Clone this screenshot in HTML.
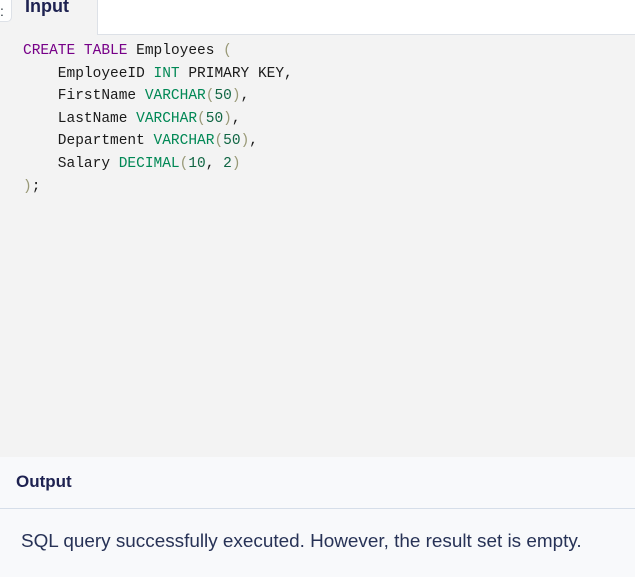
<!DOCTYPE html>
<html><head><meta charset="utf-8"><style>
html,body{margin:0;padding:0;width:635px;height:577px;overflow:hidden;background:#f3f3f3;font-family:"Liberation Sans",sans-serif}
.top{position:absolute;left:0;top:0;width:635px;height:34px;background:#f3f3f3}
.lt{position:absolute;left:-10px;top:-5px;width:20px;height:25px;background:#fff;border:1px solid #dde1e7;border-radius:0 0 5px 0}
.lt span{position:absolute;left:9px;top:7px;font-size:14px;color:#273239}
.rt{position:absolute;left:97px;top:-1px;width:540px;height:35px;background:#fff;border-left:1px solid #dde1e7;border-bottom:1px solid #dde1e7}
.tab{position:absolute;left:25px;top:-4px;font-size:18px;font-weight:bold;color:#1e2251}
pre{position:absolute;left:23px;top:40px;margin:0;font-family:"Liberation Mono",monospace;font-size:14.5px;line-height:22.6px;color:#1a1a1a}
.k{color:#770088}.t{color:#008855}.p{color:#999977}.n{color:#116644}
.out{position:absolute;left:0;top:457px;width:635px;height:120px;background:#f8f9fb}
.oh{position:absolute;left:0;top:0;width:635px;height:51px;border-bottom:1px solid #d6dee9}
.oh span{position:absolute;left:16px;top:15px;font-size:17px;font-weight:bold;color:#1e2251}
.msg{position:absolute;left:21px;top:74px;font-size:18.9px;color:#273256}
</style></head><body>
<div class="top"><div class="lt"><span>:</span></div><div class="rt"></div><div class="tab">Input</div></div>
<pre><span class="k">CREATE</span> <span class="k">TABLE</span> Employees <span class="p">(</span>
    EmployeeID <span class="t">INT</span> PRIMARY KEY,
    FirstName <span class="t">VARCHAR</span><span class="p">(</span><span class="n">50</span><span class="p">)</span>,
    LastName <span class="t">VARCHAR</span><span class="p">(</span><span class="n">50</span><span class="p">)</span>,
    Department <span class="t">VARCHAR</span><span class="p">(</span><span class="n">50</span><span class="p">)</span>,
    Salary <span class="t">DECIMAL</span><span class="p">(</span><span class="n">10</span>, <span class="n">2</span><span class="p">)</span>
<span class="p">)</span>;</pre>
<div class="out"><div class="oh"><span>Output</span></div>
<div class="msg">SQL query successfully executed. However, the result set is empty.</div></div>
</body></html>
